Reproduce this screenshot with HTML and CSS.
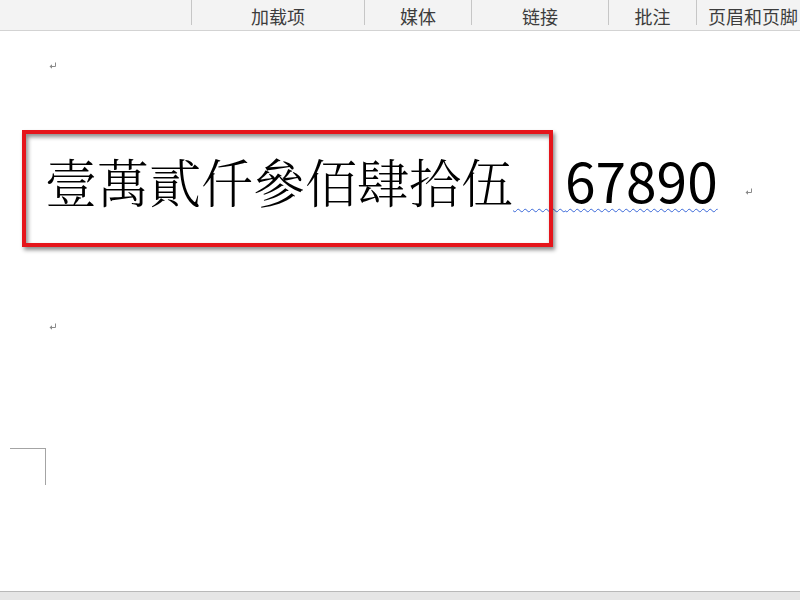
FILE: index.html
```html
<!DOCTYPE html>
<html lang="zh">
<head>
<meta charset="utf-8">
<title>Document</title>
<link rel="stylesheet" href="styles.css">
</head>
<body>
<div class="app">
  <div class="toolbar">
    <div class="tb-spacer"></div>
    <div class="tab t1">加载项</div>
    <div class="tab t2">媒体</div>
    <div class="tab t3">链接</div>
    <div class="tab t4">批注</div>
    <div class="tab t5">页眉和页脚</div>
  </div>
  <div class="doc">
    <div class="para para-empty first">
      <svg class="pmark" width="8" height="7" viewBox="0 0 8 7"><path d="M6.5 0.5 V4.5 H1.5" fill="none" stroke="#8a8a8a" stroke-width="1"/><path d="M0.5 4.5 L3 2.2 V6.8 Z" fill="#8a8a8a"/></svg>
    </div>
    <div class="para main">
      <div class="highlight"></div>
      <span class="cjk">壹萬貳仟參佰肆拾伍</span><span class="err"><span class="cjk">　</span><span class="num">67890</span></span>
      <svg class="pmark pm-main" width="8" height="7" viewBox="0 0 8 7"><path d="M6.5 0.5 V4.5 H1.5" fill="none" stroke="#8a8a8a" stroke-width="1"/><path d="M0.5 4.5 L3 2.2 V6.8 Z" fill="#8a8a8a"/></svg>
    </div>
    <div class="para para-empty second">
      <svg class="pmark" width="8" height="7" viewBox="0 0 8 7"><path d="M6.5 0.5 V4.5 H1.5" fill="none" stroke="#8a8a8a" stroke-width="1"/><path d="M0.5 4.5 L3 2.2 V6.8 Z" fill="#8a8a8a"/></svg>
    </div>
    <div class="corner"></div>
  </div>
  <div class="statusbar"></div>
</div>
</body>
</html>
```
FILE: styles.css
```css
* { box-sizing: border-box; }
html, body { margin: 0; padding: 0; }
body {
  width: 800px;
  height: 600px;
  overflow: hidden;
  background: #ffffff;
  font-family: "Noto Sans CJK SC", "Noto Sans", sans-serif;
}
.app {
  display: flex;
  flex-direction: column;
  height: 600px;
}
.toolbar {
  height: 31px;
  flex: none;
  display: flex;
  background: #f3f3f3;
  border-bottom: 1px solid #d3d3d3;
}
.tb-spacer { width: 191px; flex: none; }
.tab {
  flex: none;
  height: 25px;
  border-left: 1px solid #c6c6c6;
  font-size: 18px;
  line-height: 33px;
  color: #3c3c3c;
  text-align: center;
  white-space: nowrap;
  overflow: visible;
}
.t1 { width: 173px; }
.t2 { width: 107px; }
.t3 { width: 137px; }
.t4 { width: 88px; }
.t5 { width: 104px; text-align: left; padding-left: 11px; }

.doc {
  flex: 1;
  position: relative;
  background: #ffffff;
}
.para { padding-left: 49px; }
.para-empty { height: 10px; display: flex; align-items: flex-start; }
.first { margin-top: 31px; }
.pmark { display: block; }

.main {
  position: relative;
  margin-top: 69px;
  height: 76px;
  padding-left: 45px;
  display: flex;
  align-items: baseline;
  white-space: nowrap;
  color: #000;
}
.cjk {
  font-family: "Noto Serif CJK TC", "Source Han Serif TC", "AR PL UMing TW", "Noto Sans CJK TC", "Noto Sans CJK SC", serif;
  font-size: 52px;
  font-weight: 300;
  line-height: 76px;
}
.err {
  display: inline-flex;
  align-items: baseline;
  text-decoration: underline wavy #3a68d8;
  text-decoration-thickness: 1px;
  text-underline-offset: 5px;
}
.num {
  font-family: "Noto Sans CJK SC", sans-serif;
  font-size: 55px;
  font-weight: 400;
  line-height: 76px;
}
.pm-main { margin-left: 27px; align-self: flex-end; margin-bottom: 22px; }

.highlight {
  position: absolute;
  left: 22px;
  top: -11px;
  width: 531px;
  height: 117px;
  border: 4px solid #e5151b;
  box-shadow: 2px 3px 4px rgba(0,0,0,0.45), inset 2px 3px 4px rgba(0,0,0,0.45);
  pointer-events: none;
}

.second { margin-top: 106px; }

.corner {
  margin-top: 115px;
  margin-left: 10px;
  width: 36px;
  height: 37px;
  border-top: 1px solid #a4a4a4;
  border-right: 1px solid #a4a4a4;
}

.statusbar {
  flex: none;
  height: 9px;
  background: #e6e6e6;
  border-top: 1px solid #b9b9b9;
}
```
